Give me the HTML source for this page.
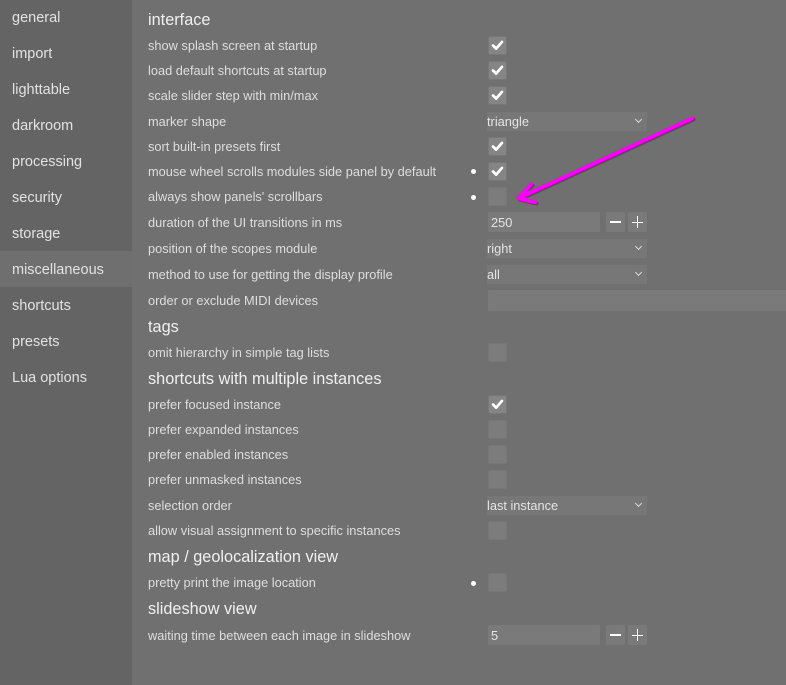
<!DOCTYPE html>
<html><head><style>
body{margin:0;width:786px;height:685px;background:#707070;font-family:"Liberation Sans",sans-serif;position:relative;overflow:hidden}
.side{position:absolute;left:0;top:0;width:132px;height:685px;background:#646464}
.si{position:absolute;left:12px;font-size:14.5px;color:#e2e2e2;line-height:20px;margin-top:1px}
.sel{position:absolute;left:0;top:251px;width:132px;height:36px;background:#6f6f6f}
.h{position:absolute;left:148px;font-size:16.3px;color:#f0f0f0;line-height:20px;margin-top:1px}
.l{position:absolute;left:148px;font-size:12.8px;color:#dedede;line-height:16px;margin-top:1px}
.cb{position:absolute;left:488px;width:19px;height:19px;background:#7c7c7c;border:1px solid #777;border-radius:2px;box-sizing:border-box}
.cb.on{background:#858585}
.dd{position:absolute;left:487px;width:160px;height:19px;background:#777;font-size:12.8px;color:#e4e4e4;line-height:19px}
.dd:after{content:"";position:absolute;right:6px;top:5px;width:4px;height:4px;border-right:1.3px solid #ddd;border-bottom:1.3px solid #ddd;transform:rotate(45deg)}
.num{position:absolute;left:488px;width:112px;height:20px;background:#7a7a7a;border-radius:2px;font-size:12.8px;color:#e4e4e4;line-height:21px;padding-left:3px;box-sizing:border-box}
.bt{position:absolute;width:19px;height:20px;background:#7a7a7a;border-radius:2px}
.dot{position:absolute;left:471px;width:5px;height:5px;border-radius:50%;background:#fff}
</style></head><body>
<div class="side"></div><div class="sel"></div>
<div class="si" style="top:7px">general</div>
<div class="si" style="top:43px">import</div>
<div class="si" style="top:79px">lighttable</div>
<div class="si" style="top:115px">darkroom</div>
<div class="si" style="top:151px">processing</div>
<div class="si" style="top:187px">security</div>
<div class="si" style="top:223px">storage</div>
<div class="si" style="top:259px">miscellaneous</div>
<div class="si" style="top:295px">shortcuts</div>
<div class="si" style="top:331px">presets</div>
<div class="si" style="top:367px">Lua options</div>

<div class="h" style="top:9px">interface</div>
<div class="l" style="top:37px">show splash screen at startup</div>
<div class="l" style="top:62px">load default shortcuts at startup</div>
<div class="l" style="top:87px">scale slider step with min/max</div>
<div class="l" style="top:113px">marker shape</div>
<div class="l" style="top:138px">sort built-in presets first</div>
<div class="l" style="top:163px">mouse wheel scrolls modules side panel by default</div>
<div class="l" style="top:188px">always show panels' scrollbars</div>
<div class="l" style="top:214px">duration of the UI transitions in ms</div>
<div class="l" style="top:240px">position of the scopes module</div>
<div class="l" style="top:266px">method to use for getting the display profile</div>
<div class="l" style="top:292px">order or exclude MIDI devices</div>
<div class="h" style="top:316px">tags</div>
<div class="l" style="top:344px">omit hierarchy in simple tag lists</div>
<div class="h" style="top:368px">shortcuts with multiple instances</div>
<div class="l" style="top:396px">prefer focused instance</div>
<div class="l" style="top:421px">prefer expanded instances</div>
<div class="l" style="top:446px">prefer enabled instances</div>
<div class="l" style="top:471px">prefer unmasked instances</div>
<div class="l" style="top:497px">selection order</div>
<div class="l" style="top:522px">allow visual assignment to specific instances</div>
<div class="h" style="top:546px">map / geolocalization view</div>
<div class="l" style="top:574px">pretty print the image location</div>
<div class="h" style="top:598px">slideshow view</div>
<div class="l" style="top:627px">waiting time between each image in slideshow</div>

<svg width="0" height="0" style="position:absolute"><defs><symbol id="ck" viewBox="0 0 19 19"><path d="M4.5 9.5 L8 13 L14.5 5.5" fill="none" stroke="#fff" stroke-width="3" stroke-linecap="round" stroke-linejoin="round"/></symbol></defs></svg>
<div class="cb on" style="top:36px"><svg width="17" height="17"><use href="#ck"/></svg></div>
<div class="cb on" style="top:61px"><svg width="17" height="17"><use href="#ck"/></svg></div>
<div class="cb on" style="top:86px"><svg width="17" height="17"><use href="#ck"/></svg></div>
<div class="dd" style="top:112px">triangle</div>
<div class="cb on" style="top:137px"><svg width="17" height="17"><use href="#ck"/></svg></div>
<div class="dot" style="top:169px"></div>
<div class="cb on" style="top:162px"><svg width="17" height="17"><use href="#ck"/></svg></div>
<div class="dot" style="top:195px"></div>
<div class="cb" style="top:187px"></div>
<div class="num" style="top:212px">250</div>
<div class="bt" style="left:606px;top:212px"><div style="position:absolute;left:4px;top:9px;width:11px;height:2px;background:#fff"></div></div>
<div class="bt" style="left:628px;top:212px"><div style="position:absolute;left:4px;top:9.5px;width:11px;height:1px;background:#fff"></div><div style="position:absolute;left:9px;top:4px;width:1px;height:12px;background:#fff"></div></div>
<div class="dd" style="top:239px">right</div>
<div class="dd" style="top:265px">all</div>
<div style="position:absolute;left:488px;top:290px;width:300px;height:21px;background:#7a7a7a;border-radius:2px"></div>
<div class="cb" style="top:343px"></div>
<div class="cb on" style="top:395px"><svg width="17" height="17"><use href="#ck"/></svg></div>
<div class="cb" style="top:420px"></div>
<div class="cb" style="top:445px"></div>
<div class="cb" style="top:470px"></div>
<div class="dd" style="top:496px">last instance</div>
<div class="cb" style="top:521px"></div>
<div class="dot" style="top:581px"></div>
<div class="cb" style="top:573px"></div>
<div class="num" style="top:625px">5</div>
<div class="bt" style="left:606px;top:625px"><div style="position:absolute;left:4px;top:9px;width:11px;height:2px;background:#fff"></div></div>
<div class="bt" style="left:628px;top:625px"><div style="position:absolute;left:4px;top:9.5px;width:11px;height:1px;background:#fff"></div><div style="position:absolute;left:9px;top:4px;width:1px;height:12px;background:#fff"></div></div>

<svg style="position:absolute;left:0;top:0" width="786" height="685">
<g transform="translate(1.5,1.5)" stroke="#333" stroke-opacity="0.5" fill="none" stroke-width="4" stroke-linecap="round"><path d="M692 118 L518 198 M518 198 L531 184 M518 198 L535 202"/></g>
<g stroke="#ff00ff" fill="none" stroke-width="4" stroke-linecap="round" stroke-linejoin="round"><path d="M692 118 L518 198 M518 198 L531 184 M518 198 L535 202"/></g>
</svg>
</body></html>
